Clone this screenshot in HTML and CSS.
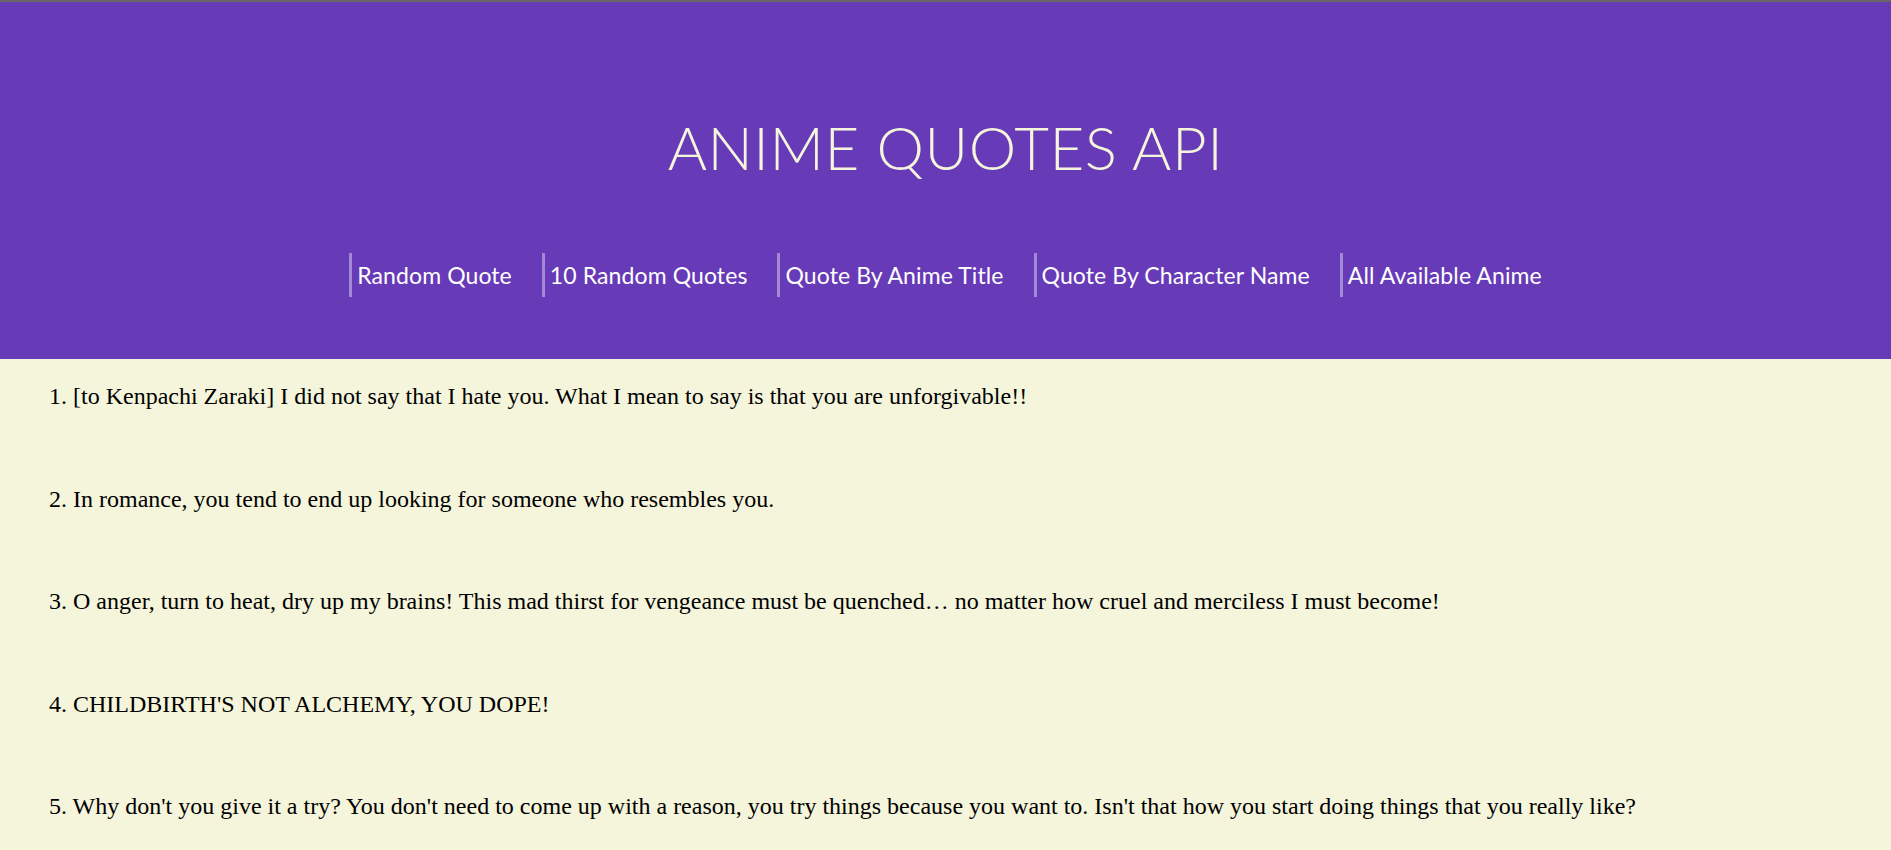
FILE: index.html
```html
<!DOCTYPE html>
<html lang="en">
<head>
<meta charset="utf-8">
<title>Anime Quotes API</title>
<link rel="stylesheet" href="styles.css">
</head>
<body>
<header class="site-header">
  <h1 class="site-title">ANIME QUOTES API</h1>
  <nav class="site-nav">
    <a class="nav-link" href="#">Random Quote</a>
    <a class="nav-link" href="#">10 Random Quotes</a>
    <a class="nav-link" href="#">Quote By Anime Title</a>
    <a class="nav-link" href="#">Quote By Character Name</a>
    <a class="nav-link" href="#">All Available Anime</a>
  </nav>
</header>
<main class="quotes">
  <p class="quote">1. [to Kenpachi Zaraki] I did not say that I hate you. What I mean to say is that you are unforgivable!!</p>
  <p class="quote">2. In romance, you tend to end up looking for someone who resembles you.</p>
  <p class="quote">3. O anger, turn to heat, dry up my brains! This mad thirst for vengeance must be quenched… no matter how cruel and merciless I must become!</p>
  <p class="quote">4. CHILDBIRTH'S NOT ALCHEMY, YOU DOPE!</p>
  <p class="quote">5. Why don't you give it a try? You don't need to come up with a reason, you try things because you want to. Isn't that how you start doing things that you really like?</p>
</main>
</body>
</html>
```

FILE: styles.css
```css
html, body {
  margin: 0;
  padding: 0;
}

body {
  background: #f5f5dc;
  overflow: hidden;
}

.site-header {
  background: #673ab7;
  border-top: 2px solid #666666;
  padding: 109px 0 62px;
  text-align: center;
  font-family: "Lato", "Open Sans", sans-serif;
}

.site-title {
  margin: 0;
  font-size: 60px;
  line-height: 72px;
  font-weight: 300;
  color: #f5f5dc;
  letter-spacing: 0.5px;
}

.site-nav {
  margin-top: 70px;
  display: flex;
  justify-content: center;
  gap: 30px;
}

.nav-link {
  display: block;
  border-left: 3px solid rgba(255, 255, 255, 0.4);
  padding-left: 5px;
  font-size: 23px;
  line-height: 44px;
  letter-spacing: 0.1px;
  color: #ffffff;
  text-decoration: none;
}

.quotes {
  padding: 23px 49px 0;
  font-family: "Liberation Serif", "Times New Roman", serif;
  color: #000000;
}

.quote {
  margin: 0 0 74.5px;
  font-size: 24px;
  line-height: 28px;
}
```
